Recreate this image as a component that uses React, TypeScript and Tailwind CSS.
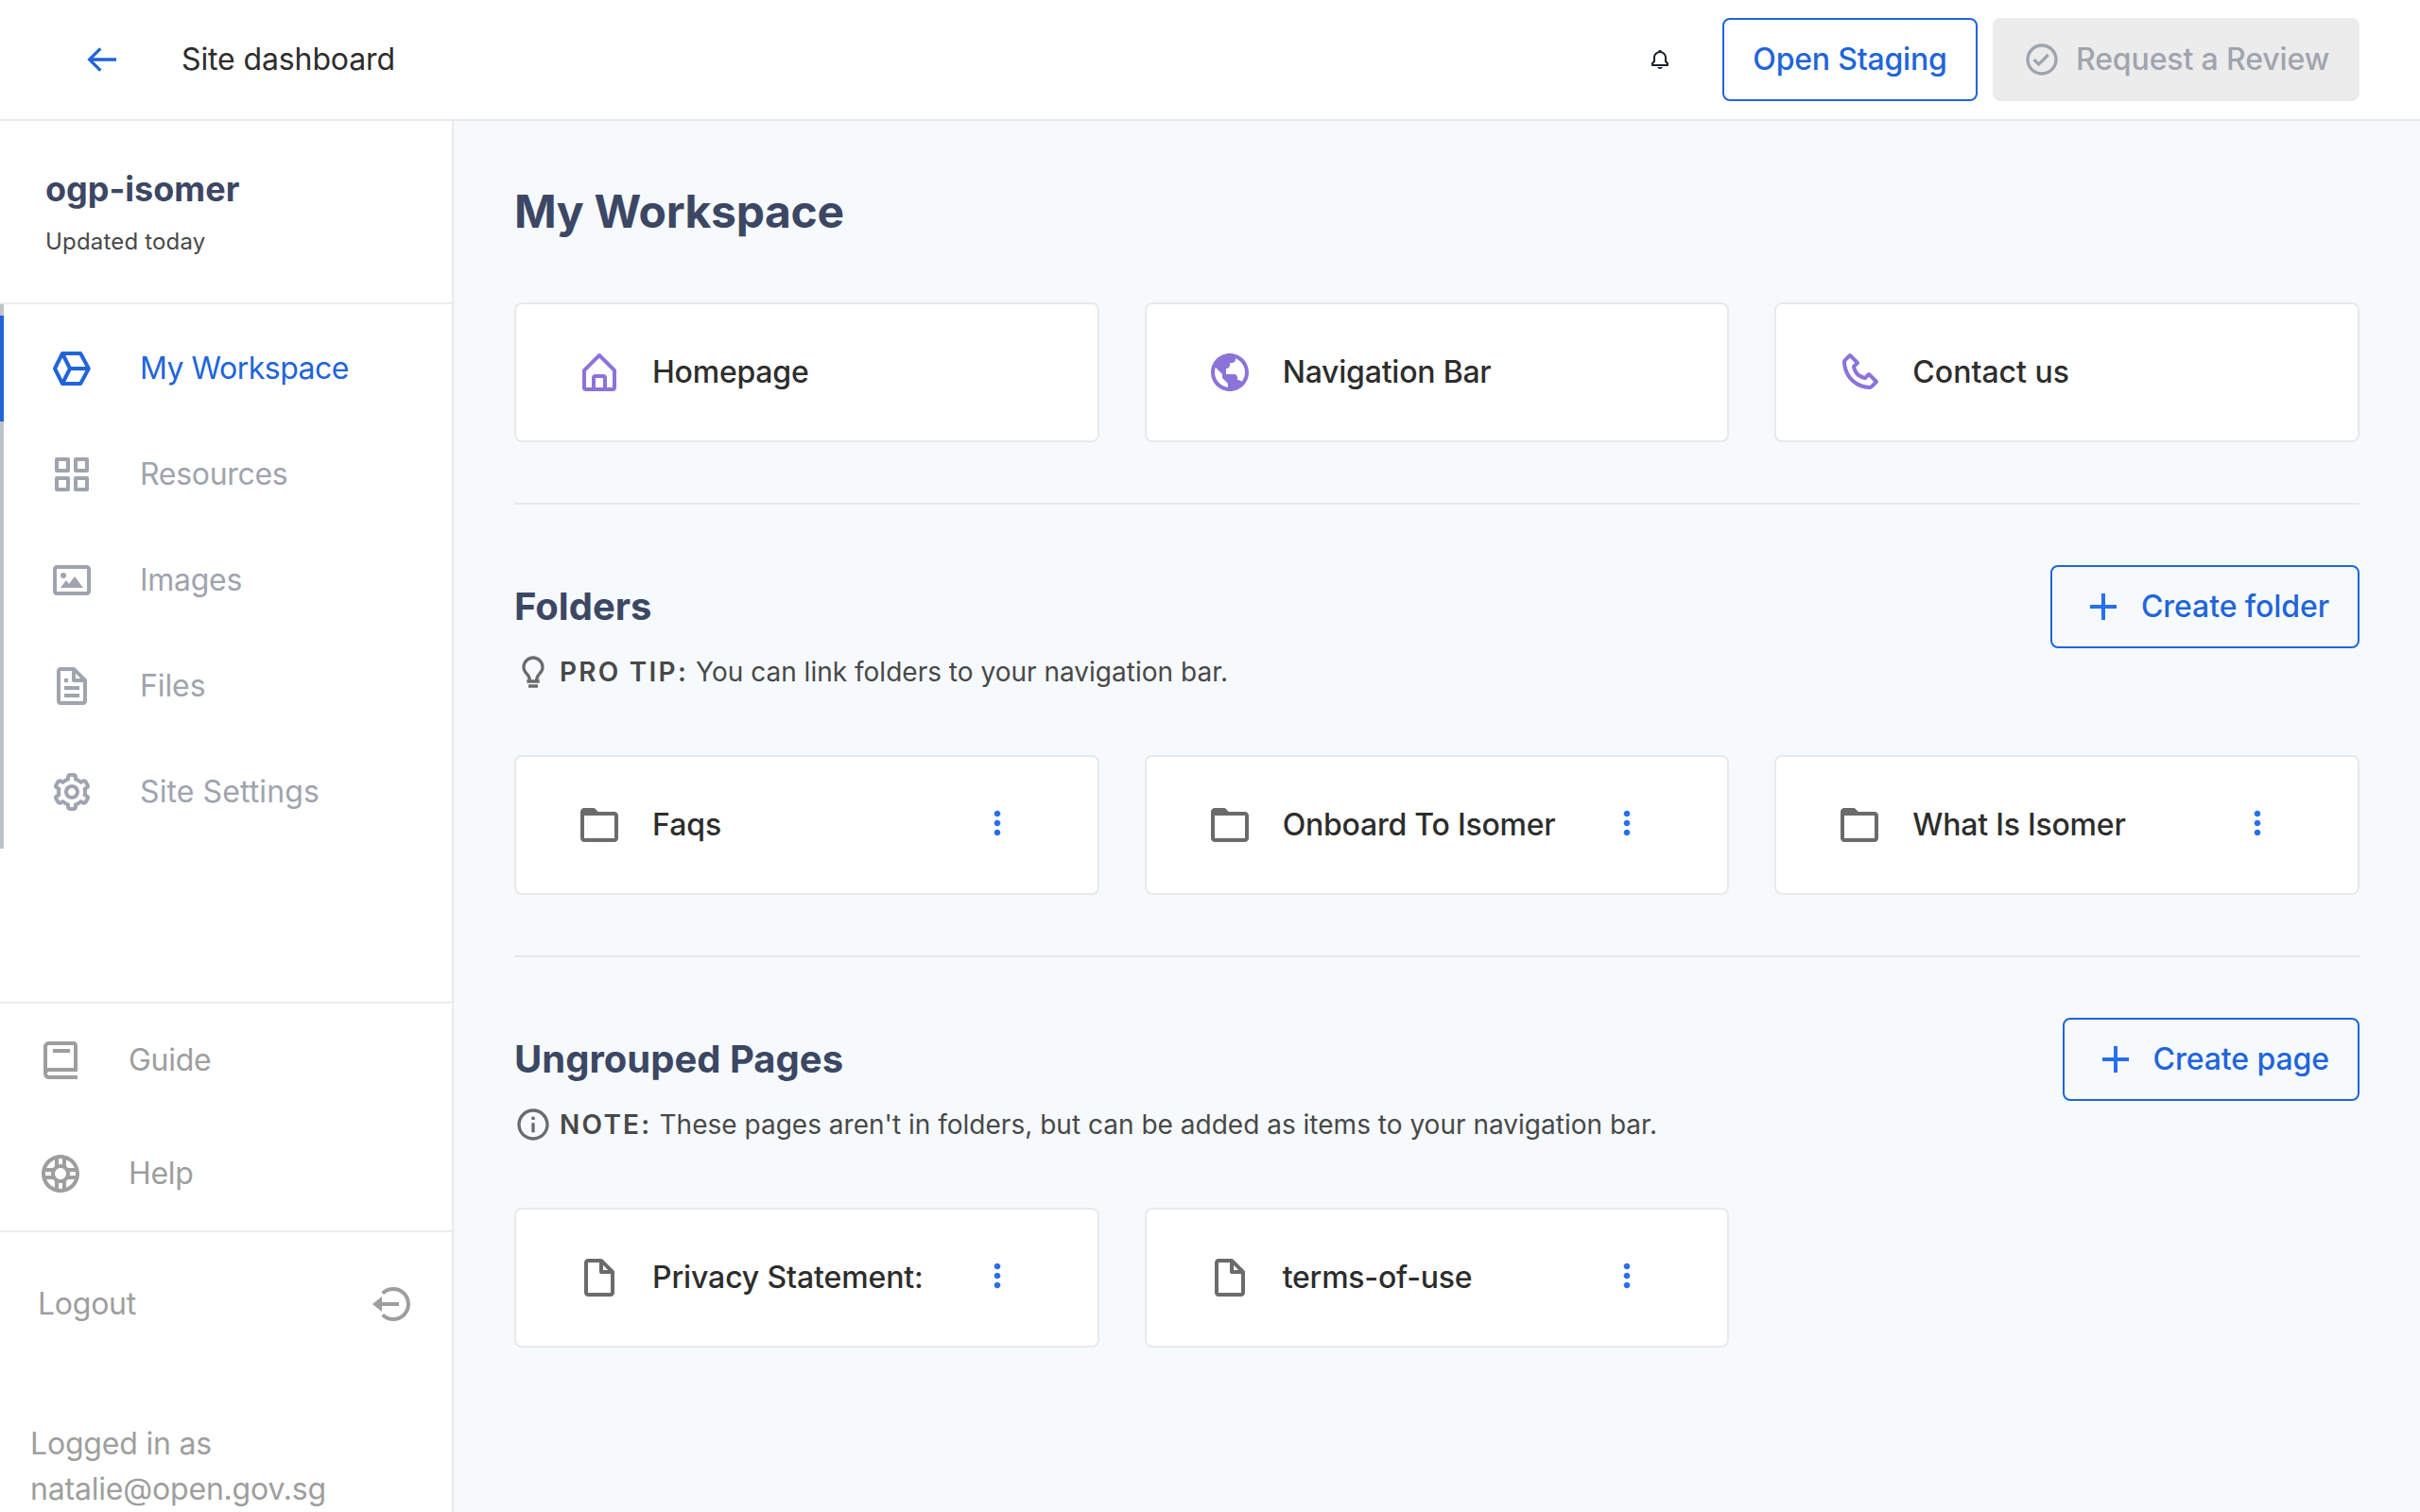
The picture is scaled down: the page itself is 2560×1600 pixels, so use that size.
import type { ReactNode } from "react";
import {
  BiArrowBack,
  BiBell,
  BiBook,
  BiBulb,
  BiBuoy,
  BiCheckCircle,
  BiCog,
  BiDotsVerticalRounded,
  BiFile,
  BiFileBlank,
  BiFolder,
  BiGridAlt,
  BiHomeAlt,
  BiImage,
  BiInfoCircle,
  BiLogOutCircle,
  BiPhone,
  BiPlus,
  BiWorld,
} from "react-icons/bi";

function WorkspaceIcon() {
  return (
    <svg viewBox="0 0 24 24" className="size-12" fill="none" stroke="currentColor" strokeWidth="2" strokeLinejoin="round">
      <path d="M7 4h9.6l4.3 8-4.3 8H7l-4-8z" />
      <path d="M7 4l4 8-4 8M11 12h10" />
    </svg>
  );
}

function NavItem({
  icon,
  label,
  active,
  tracking = "tracking-[-0.3px]",
}: {
  icon: ReactNode;
  label: string;
  active?: boolean;
  tracking?: string;
}) {
  return (
    <a
      className={
        active
          ? "flex h-28 items-center gap-12 border-l-4 border-[#2164da] pl-12 text-[#2164da]"
          : "flex h-28 items-center gap-12 border-l-4 border-[#bfc2c8] pl-12 text-[#9fa4ae]"
      }
    >
      {icon}
      <span className={`text-[32px] leading-12 ${tracking}`}>{label}</span>
    </a>
  );
}

function FooterItem({ icon, label }: { icon: ReactNode; label: string }) {
  return (
    <a className="flex h-30 items-center gap-12 pl-10">
      {icon}
      <span className="text-[32px] leading-12 tracking-[-0.3px]">{label}</span>
    </a>
  );
}

function Card({
  icon,
  label,
  menu,
  tracking = "tracking-[-0.22px]",
}: {
  icon: ReactNode;
  label: string;
  menu?: boolean;
  tracking?: string;
}) {
  return (
    <div className="flex h-37 items-center rounded-lg border-2 border-[#e9e9e9] bg-white pl-16 pr-[86px]">
      {icon}
      <span className={`ml-8 flex-1 text-[32px] leading-12 font-medium text-[#2d2d2d] ${tracking}`}>{label}</span>
      {menu && <BiDotsVerticalRounded className="mb-1 size-10 text-[#276ef1]" />}
    </div>
  );
}

function CreateButton({ label }: { label: string }) {
  return (
    <button className="flex h-22 items-center gap-4 rounded-lg border-2 border-[#2164da] px-[30px] text-[#2164da]">
      <BiPlus className="size-12 text-[#276ef1]" />
      <span className="text-[32px] leading-12 font-medium tracking-[-0.08px]">{label}</span>
    </button>
  );
}

function Section(props: { title: string; action: string; icon: ReactNode; tag: string; note: string; children: ReactNode }) {
  return (
    <section className="mt-16 border-t-2 border-[#e9e9e9] pt-16">
      <div className="flex h-22 items-center justify-between">
        <h2 className="text-[40px] leading-12 font-bold text-[#3c4764]">{props.title}</h2>
        <CreateButton label={props.action} />
      </div>
      <div className="mt-[5px] flex h-10 items-center text-[28px] leading-10 text-[#484848]">
        <span className="text-[#6b6b6b]">{props.icon}</span>
        <span className="ml-2 font-semibold tracking-[0.08em]">{props.tag}</span>
        <span className="ml-2 tracking-[0.01px]">{props.note}</span>
      </div>
      <div className="mt-17 grid grid-cols-3 gap-12">{props.children}</div>
    </section>
  );
}

export default function App() {
  return (
    <div className="flex h-[1600px] w-[2560px] flex-col overflow-hidden bg-white font-['Inter',sans-serif]">
      <header className="flex h-32 shrink-0 items-center border-b-2 border-[#e9e9e9] pl-22 pr-16">
        <BiArrowBack className="size-10 text-[#2164da]" />
        <span className="ml-16 text-[32px] leading-12 tracking-[-0.12px] text-[#2d2d2d]">Site dashboard</span>
        <BiBell className="ml-auto size-6 text-[#1b1f2c]" />
        <button className="ml-[54px] h-22 w-[270px] rounded-lg border-2 border-[#2164da] text-[32px] leading-12 font-medium tracking-[-0.2px] whitespace-nowrap text-[#2164da]">
          Open Staging
        </button>
        <button className="ml-4 flex h-22 w-97 items-center gap-4 rounded-lg bg-[#ececec] pl-8 text-[32px] leading-12 font-medium tracking-[-0.12px] whitespace-nowrap text-[#9fa4ae]">
          <BiCheckCircle className="size-10" />
          Request a Review
        </button>
      </header>

      <div className="flex min-h-0 flex-1">
        <aside className="flex w-120 shrink-0 flex-col border-r-2 border-[#e9e9e9]">
          <div className="h-[194px] border-b-2 border-[#ececec] px-12 pt-12">
            <div className="text-[36px] leading-12 font-bold text-[#3c4764]">ogp-isomer</div>
            <div className="mt-4 text-[24px] leading-8 tracking-[0.18px] text-[#484848]">Updated today</div>
          </div>
          <nav className="h-[738px]">
            <div className="h-3 border-l-4 border-[#bfc2c8]" />
            <NavItem active icon={<WorkspaceIcon />} label="My Workspace" tracking="tracking-[-0.5px]" />
            <NavItem icon={<BiGridAlt className="size-12" />} label="Resources" />
            <NavItem icon={<BiImage className="size-12" />} label="Images" />
            <NavItem icon={<BiFile className="size-12" />} label="Files" tracking="tracking-[-0.1px]" />
            <NavItem icon={<BiCog className="size-12" />} label="Site Settings" tracking="tracking-[0.1px]" />
            <div className="h-1 border-l-4 border-[#bfc2c8]" />
          </nav>
          <div className="border-y-2 border-[#ececec] text-[#9e9e9e]">
            <FooterItem icon={<BiBook className="size-12" />} label="Guide" />
            <FooterItem icon={<BiBuoy className="size-12" />} label="Help" />
          </div>
          <div className="mt-13 flex items-center justify-between pl-10 pr-10 text-[32px] leading-12 tracking-[-0.25px] text-[#9e9e9e]">
            Logout
            <BiLogOutCircle className="size-12" />
          </div>
          <div className="mt-25 pl-8 text-[32px] leading-12 tracking-[-0.19px] text-[#9e9e9e]">
            Logged in as
            <br />
            natalie@open.gov.sg
          </div>
        </aside>

        <main className="flex-1 bg-[#f6fafd] px-16 pt-16">
          <h1 className="text-[48px] leading-16 font-bold tracking-[-0.34px] text-[#3c4764]">My Workspace</h1>
          <div className="mt-16 grid grid-cols-3 gap-12">
            <Card icon={<BiHomeAlt className="size-12 text-[#8c73da]" />} label="Homepage" />
            <Card icon={<BiWorld className="size-12 text-[#8c73da]" />} label="Navigation Bar" />
            <Card icon={<BiPhone className="size-12 text-[#8c73da]" />} label="Contact us" tracking="tracking-normal" />
          </div>

          <Section
            title="Folders"
            action="Create folder"
            icon={<BiBulb className="size-10" />}
            tag="PRO TIP:"
            note="You can link folders to your navigation bar."
          >
            <Card menu icon={<BiFolder className="size-12 text-[#6b6b6b]" />} label="Faqs" tracking="tracking-normal" />
            <Card menu icon={<BiFolder className="size-12 text-[#6b6b6b]" />} label="Onboard To Isomer" />
            <Card menu icon={<BiFolder className="size-12 text-[#6b6b6b]" />} label="What Is Isomer" />
          </Section>

          <Section
            title="Ungrouped Pages"
            action="Create page"
            icon={<BiInfoCircle className="size-10" />}
            tag="NOTE:"
            note="These pages aren't in folders, but can be added as items to your navigation bar."
          >
            <Card
              menu
              icon={<BiFileBlank className="size-12 text-[#6b6b6b]" />}
              label="Privacy Statement:"
              tracking="tracking-[-0.12px]"
            />
            <Card menu icon={<BiFileBlank className="size-12 text-[#6b6b6b]" />} label="terms-of-use" />
          </Section>
        </main>
      </div>
    </div>
  );
}
